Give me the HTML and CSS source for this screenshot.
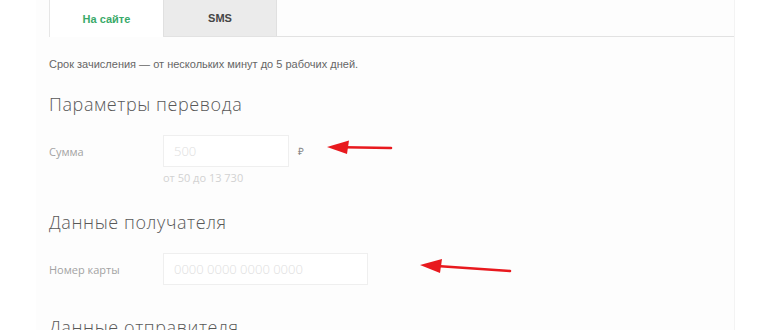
FILE: index.html
```html
<!DOCTYPE html>
<html lang="ru">
<head>
<meta charset="utf-8">
<title>Перевод</title>
<link rel="stylesheet" href="styles.css">
</head>
<body>
<div class="panel">
  <div class="tabs">
    <div class="tab tab-active">На сайте</div>
    <div class="tab tab-sms">SMS</div>
  </div>
  <p class="note">Срок зачисления — от нескольких минут до 5 рабочих дней.</p>

  <h2 class="heading heading-first">Параметры перевода</h2>
  <div class="row">
    <span class="label">Сумма</span>
    <input class="field field-sum" type="text" placeholder="500">
    <span class="currency">₽</span>
  </div>
  <div class="hint">от 50 до 13 730</div>

  <h2 class="heading heading-second">Данные получателя</h2>
  <div class="row">
    <span class="label">Номер карты</span>
    <input class="field field-card" type="text" placeholder="0000 0000 0000 0000">
  </div>

  <h2 class="heading heading-third">Данные отправителя</h2>
</div>

<svg class="arrows" width="770" height="330" viewBox="0 0 770 330" xmlns="http://www.w3.org/2000/svg">
  <line x1="344" y1="147.3" x2="391" y2="148" stroke="#e8191e" stroke-width="2.6" stroke-linecap="round"/>
  <polygon points="327,147 349,140.5 347,154" fill="#e8191e"/>
  <line x1="437" y1="266" x2="510" y2="271" stroke="#e8191e" stroke-width="2.6" stroke-linecap="round"/>
  <polygon points="420,265 442,259 440,273" fill="#e8191e"/>
</svg>
</body>
</html>
```

FILE: styles.css
```css
html, body {
  margin: 0;
  padding: 0;
  background: #ffffff;
}

body {
  width: 770px;
  height: 330px;
  overflow: hidden;
  position: relative;
  font-family: "Open Sans", "Liberation Sans", sans-serif;
}

.panel {
  margin-left: 36px;
  width: 699px;
  height: 330px;
  box-sizing: border-box;
  padding: 0 0 0 13px;
  background: #fdfdfd;
  border-right: 1px solid #f3f3f3;
  overflow: hidden;
}

.tabs {
  display: flex;
  height: 36px;
  border-bottom: 1px solid #e2e2e2;
}

.tab {
  width: 114px;
  box-sizing: border-box;
  display: flex;
  align-items: center;
  justify-content: center;
  font-family: "Liberation Sans", Arial, sans-serif;
  font-weight: bold;
  font-size: 11px;
}

.tab-active {
  background: #ffffff;
  color: #3aaa6a;
  border-left: 1px solid #e6e6e6;
  height: 37px;
  margin-bottom: -1px;
}

.tab-sms {
  background: #ebebeb;
  color: #454545;
  border-left: 1px solid #e0e0e0;
  border-right: 1px solid #e0e0e0;
}

.note {
  margin: 20px 0 0 0;
  font-family: "Liberation Sans", Arial, sans-serif;
  font-size: 11px;
  line-height: 14px;
  color: #666666;
}

.heading {
  margin: 0;
  font-family: "Open Sans", sans-serif;
  font-weight: 300;
  font-size: 18px;
  line-height: 24px;
  color: #585858;
  letter-spacing: 0.6px;
}

.heading-first {
  margin-top: 21px;
}

.heading-second {
  margin-top: 25px;
}

.heading-third {
  margin-top: 30px;
}

.row {
  display: flex;
  align-items: center;
  margin-top: 19px;
}

.label {
  width: 114px;
  flex: none;
  font-size: 11px;
  color: #a3a3a3;
}

.field {
  box-sizing: border-box;
  height: 32px;
  margin: 0;
  padding: 0 10px;
  border: 1px solid #efefef;
  background: #ffffff;
  font-family: "Open Sans", sans-serif;
  font-weight: 300;
  font-size: 13px;
  color: #555555;
  outline: none;
}

.field::placeholder {
  color: #dedede;
}

.field-sum {
  width: 126px;
}

.field-card {
  width: 205px;
}

.currency {
  margin-left: 9px;
  font-size: 10px;
  color: #888888;
}

.hint {
  margin: 4px 0 0 114px;
  font-size: 11px;
  line-height: 14px;
  color: #d2d2d2;
}

.arrows {
  position: absolute;
  top: 0;
  left: 0;
  pointer-events: none;
}
```
